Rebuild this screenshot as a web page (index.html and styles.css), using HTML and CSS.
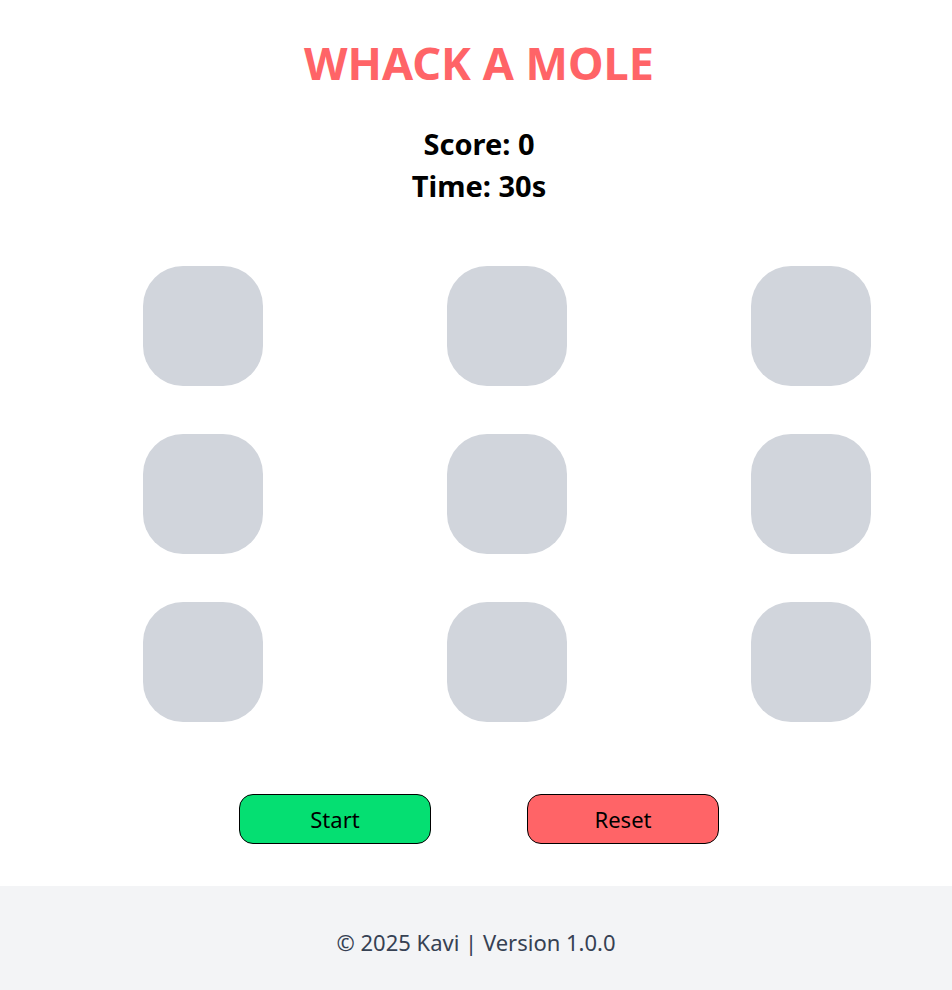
FILE: index.html
```html
<!DOCTYPE html>
<html lang="en">
<head>
<meta charset="utf-8">
<title>Whack a Mole</title>
<link rel="stylesheet" href="styles.css">
</head>
<body>
<main class="game">
  <h1 class="title">WHACK A MOLE</h1>
  <div class="stats">
    <p class="stat">Score: 0</p>
    <p class="stat">Time: 30s</p>
  </div>
  <div class="board">
    <div class="hole"></div><div class="hole"></div><div class="hole"></div>
    <div class="hole"></div><div class="hole"></div><div class="hole"></div>
    <div class="hole"></div><div class="hole"></div><div class="hole"></div>
  </div>
  <div class="controls">
    <button class="btn btn-start">Start</button>
    <button class="btn btn-reset">Reset</button>
  </div>
</main>
<footer class="footer">© 2025 Kavi | Version 1.0.0</footer>
</body>
</html>
```
FILE: styles.css
```css
* { box-sizing: border-box; }
html, body { margin: 0; padding: 0; background: #fff; }
body {
  font-family: "Noto Sans", "Open Sans", sans-serif;
  color: #000;
}
.game {
  display: flex;
  flex-direction: column;
  align-items: center;
  padding: 40px 0 42px 6px;
}
.title {
  margin: 0;
  font-size: 45px;
  line-height: 45px;
  font-weight: 700;
  color: #ff6467;
}
.stats {
  margin-top: 38px;
  display: flex;
  flex-direction: column;
  align-items: center;
}
.stat {
  margin: 0;
  font-size: 29px;
  line-height: 42px;
  font-weight: 700;
}
.board {
  margin-top: 59px;
  display: grid;
  grid-template-columns: repeat(3, 120px);
  column-gap: 184px;
  row-gap: 48px;
  margin-left: 56px;
}
.hole {
  width: 120px;
  height: 120px;
  border-radius: 40px;
  background: #d1d5dc;
}
.controls {
  margin-top: 72px;
  display: flex;
  gap: 96px;
}
.btn {
  width: 192px;
  height: 50px;
  border: 1px solid #000;
  border-radius: 14px;
  font-family: inherit;
  font-size: 22px;
  color: #000;
  cursor: pointer;
}
.btn-start { background: #05df72; }
.btn-reset { background: #ff6467; }
.footer {
  background: #f3f4f6;
  height: 104px;
  display: flex;
  align-items: center;
  justify-content: center;
  padding-top: 7px;
  font-size: 22px;
  color: #364153;
}
```
